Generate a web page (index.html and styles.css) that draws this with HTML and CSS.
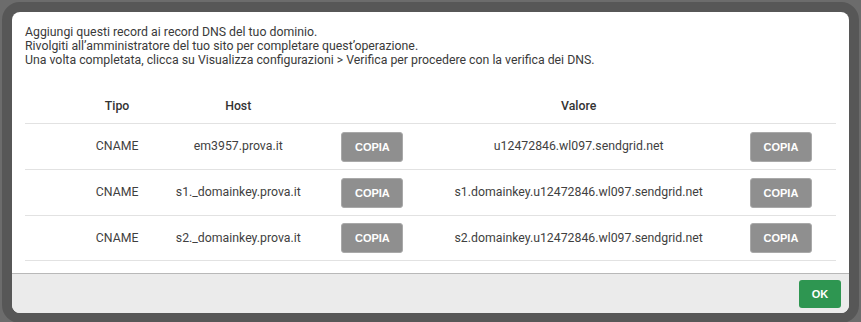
FILE: index.html
```html
<!DOCTYPE html>
<html lang="it">
<head>
    <meta charset="UTF-8">
    <meta name="viewport" content="width=device-width, initial-scale=1.0">
    <title>Record DNS</title>
    <link rel="stylesheet" href="styles.css">
</head>
<body>
    <div class="backdrop">
        <div class="frame">
            <div class="modal">
                <div class="modal-body">
                    <p class="intro">
                        Aggiungi questi record ai record DNS del tuo dominio.<br>
                        Rivolgiti all’amministratore del tuo sito per completare quest’operazione.<br>
                        Una volta completata, clicca su Visualizza configurazioni &gt; Verifica per procedere con la verifica dei DNS.
                    </p>

                    <table class="dns-table">
                        <colgroup>
                            <col style="width: 46px">
                            <col style="width: 92px">
                            <col style="width: 150px">
                            <col style="width: 118px">
                            <col style="width: 294px">
                            <col style="width: 110px">
                        </colgroup>
                        <thead>
                            <tr>
                                <th></th>
                                <th>Tipo</th>
                                <th>Host</th>
                                <th></th>
                                <th>Valore</th>
                                <th></th>
                            </tr>
                        </thead>
                        <tbody>
                            <tr>
                                <td></td>
                                <td>CNAME</td>
                                <td>em3957.prova.it</td>
                                <td><button class="btn-copy">COPIA</button></td>
                                <td>u12472846.wl097.sendgrid.net</td>
                                <td><button class="btn-copy">COPIA</button></td>
                            </tr>
                            <tr>
                                <td></td>
                                <td>CNAME</td>
                                <td>s1._domainkey.prova.it</td>
                                <td><button class="btn-copy">COPIA</button></td>
                                <td>s1.domainkey.u12472846.wl097.sendgrid.net</td>
                                <td><button class="btn-copy">COPIA</button></td>
                            </tr>
                            <tr>
                                <td></td>
                                <td>CNAME</td>
                                <td>s2._domainkey.prova.it</td>
                                <td><button class="btn-copy">COPIA</button></td>
                                <td>s2.domainkey.u12472846.wl097.sendgrid.net</td>
                                <td><button class="btn-copy">COPIA</button></td>
                            </tr>
                        </tbody>
                    </table>
                </div>
                <div class="modal-footer">
                    <button class="btn-ok">OK</button>
                </div>
            </div>
        </div>
    </div>
</body>
</html>
```

FILE: styles.css
```css
html, body {
    margin: 0;
    height: 100%;
}
body {
    font-family: Roboto, 'Liberation Sans', sans-serif;
    background: #6c6c6c;
    color: #333;
}
.backdrop {
    padding: 2px 2px 0 2px;
    height: 100%;
    box-sizing: border-box;
}
.frame {
    border: 10px solid #575757;
    border-radius: 18px;
    background: #575757;
}
.modal {
    background: white;
    border-radius: 8px;
    overflow: hidden;
}
.modal-body {
    padding: 13px 13px 12px 13px;
}
.intro {
    margin: 0;
    font-size: 12.3px;
    line-height: 14px;
    color: #3a3a3a;
}
.dns-table {
    width: 100%;
    margin-top: 22px;
    border-collapse: collapse;
    table-layout: fixed;
    font-size: 12.3px;
}
.dns-table th {
    font-weight: 500;
    color: #333;
    padding: 10px 0;
    line-height: 14px;
    text-align: center;
    border-bottom: 1px solid #e2e2e2;
}
.dns-table td {
    color: #3f3f3f;
    text-align: center;
    padding: 7px 0;
    line-height: 30px;
    border-bottom: 1px solid #e2e2e2;
    white-space: nowrap;
}
.btn-copy {
    display: inline-block;
    vertical-align: middle;
    width: 62px;
    height: 30px;
    background: #8f8f8f;
    border: 1px solid #a9a9a9;
    border-radius: 3px;
    color: white;
    font-family: 'Liberation Sans', Arial, sans-serif;
    font-weight: bold;
    font-size: 11px;
    padding: 0;
}
.modal-footer {
    background: #ebebeb;
    border-top: 1px solid #b8b8b8;
    display: flex;
    justify-content: flex-end;
    padding: 6px 8px 5px 0;
}
.btn-ok {
    width: 42px;
    height: 28px;
    background: #2e9651;
    border: none;
    border-radius: 3px;
    color: white;
    font-family: 'Liberation Sans', Arial, sans-serif;
    font-weight: bold;
    font-size: 11px;
    padding: 0;
}
```
